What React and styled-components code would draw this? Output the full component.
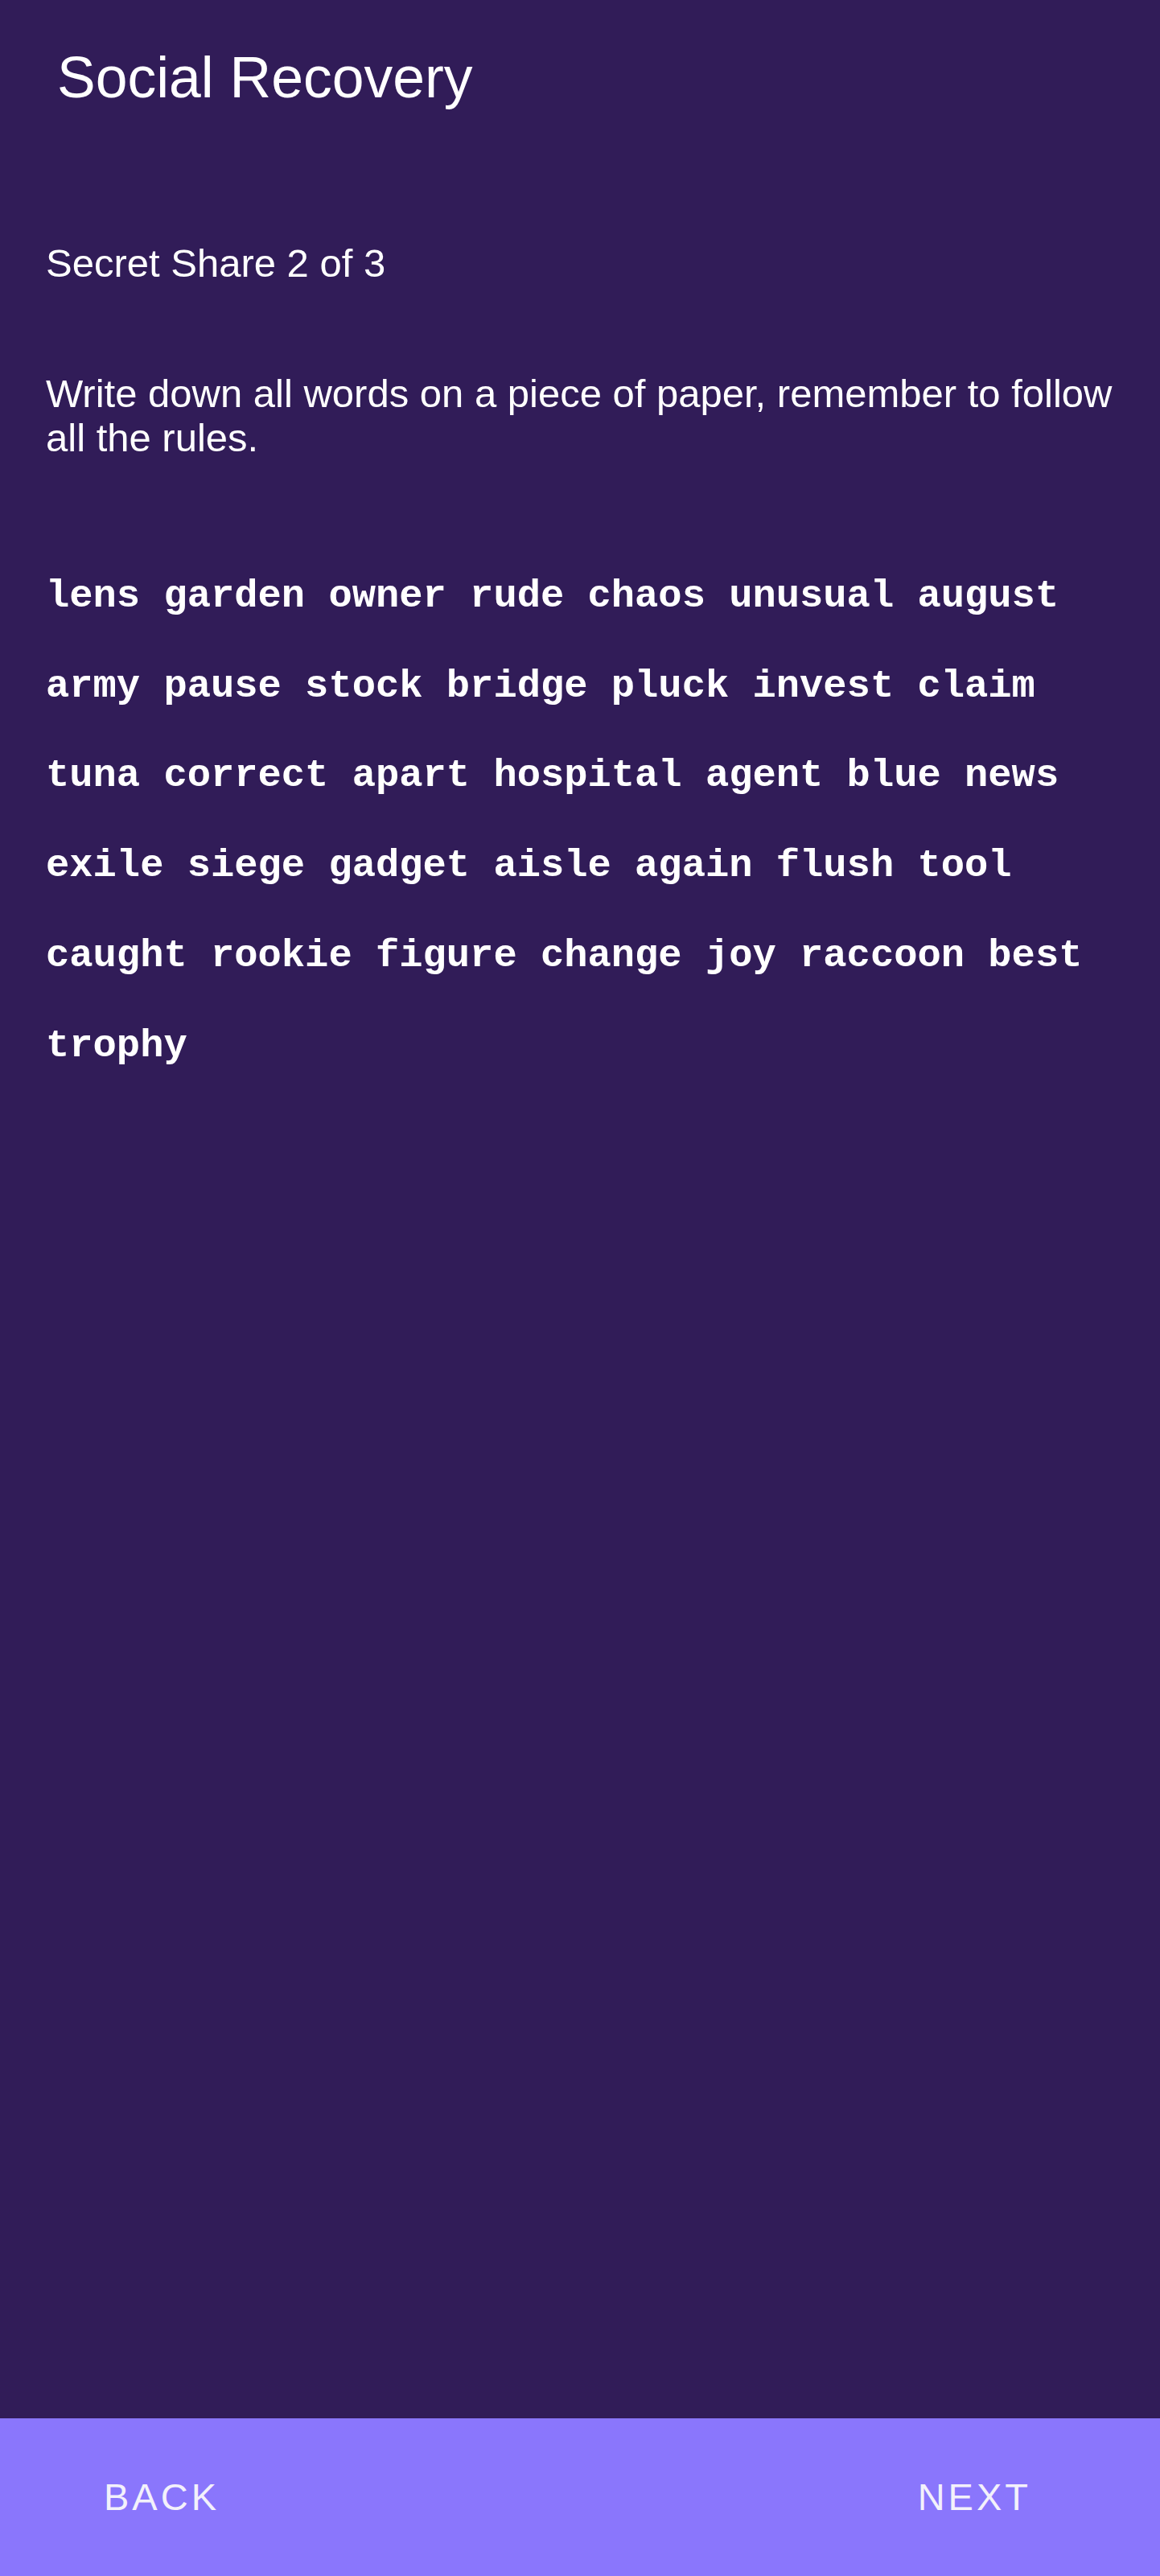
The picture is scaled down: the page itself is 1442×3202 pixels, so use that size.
import React from "react";
import styled, { createGlobalStyle } from "styled-components";

const GlobalStyle = createGlobalStyle`
  html, body {
    margin: 0;
    padding: 0;
    background: #311c58;
  }
  body {
    font-family: "Liberation Sans", Arial, sans-serif;
    -webkit-font-smoothing: antialiased;
  }
  * {
    box-sizing: border-box;
  }
`;

const Screen = styled.div`
  min-height: 100vh;
  display: flex;
  flex-direction: column;
  background: #311c58;
  color: #ffffff;
`;

const Toolbar = styled.header`
  padding: 56px 0 0 71px;
`;

const Title = styled.h1`
  margin: 0;
  font-size: 71.5px;
  font-weight: 400;
  line-height: 80px;
`;

const Content = styled.main`
  flex: 1;
  display: flex;
  flex-direction: column;
  padding: 0 40px 0 57px;
`;

const Subtitle = styled.div`
  margin-top: 164px;
  font-size: 49px;
  line-height: 55px;
`;

const Hint = styled.p`
  margin: 107px 0 0;
  font-size: 49px;
  line-height: 55px;
`;

const Words = styled.p`
  margin: 114px 0 0;
  font-family: "Liberation Mono", "Courier New", monospace;
  font-weight: 700;
  font-size: 48.8px;
  line-height: 111.7px;
`;

const BottomBar = styled.footer`
  height: 196px;
  flex-shrink: 0;
  display: flex;
  align-items: center;
  justify-content: space-between;
  padding: 0 160px 0 129px;
  background: #8a76fc;
`;

const TextButton = styled.button`
  border: none;
  background: transparent;
  padding: 0;
  color: #f3f1fb;
  font-family: "Liberation Sans", Arial, sans-serif;
  font-size: 47px;
  letter-spacing: 4px;
  text-transform: uppercase;
  line-height: 56px;
  cursor: pointer;
`;

const mnemonic =
  "lens garden owner rude chaos unusual august army pause stock bridge pluck invest claim tuna correct apart hospital agent blue news exile siege gadget aisle again flush tool caught rookie figure change joy raccoon best trophy";

export default function App() {
  return (
    <React.Fragment>
      <GlobalStyle />
      <Screen>
        <Toolbar>
          <Title>Social Recovery</Title>
        </Toolbar>
        <Content>
          <Subtitle>Secret Share 2 of 3</Subtitle>
          <Hint>
            Write down all words on a piece of paper, remember to follow all the rules.
          </Hint>
          <Words>{mnemonic}</Words>
        </Content>
        <BottomBar>
          <TextButton>Back</TextButton>
          <TextButton>Next</TextButton>
        </BottomBar>
      </Screen>
    </React.Fragment>
  );
}
